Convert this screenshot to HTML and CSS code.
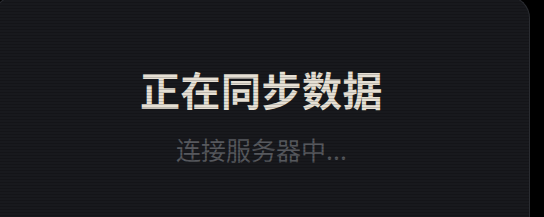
FILE: index.html
```html
<!doctype html>
<html lang="zh-CN">
<head>
  <meta charset="utf-8">
  <title>正在同步数据</title>
  <link rel="stylesheet" href="styles.css">
</head>
<body>

<div class="sync-card">
  <h1 class="sync-title">正在同步数据</h1>
  <p class="sync-status">连接服务器中...</p>
</div>

</body>
</html>
```

FILE: styles.css
```css
html {
  background-color: #000;
  overflow: hidden;
}

body {
  margin: 0;
  height: 217px;
  font-family: "Noto Sans CJK SC", "Noto Sans", sans-serif;
  overflow: hidden;
}

/* The loading card; it continues past the bottom of the frame */
.sync-card {
  position: relative;
  box-sizing: border-box;
  width: 537px;
  height: 221px;
  margin: -4px 0 0 -7px;
  padding-top: 64px;
  background-color: #18191d;
  border: 1px solid #2a2c31;
  border-bottom: 0;
  border-radius: 22px 22px 0 0;
  display: flex;
  flex-direction: column;
  align-items: center;
}

/* CRT-style scanlines laid over everything */
.sync-card::after {
  content: "";
  position: absolute;
  inset: 0;
  border-radius: inherit;
  pointer-events: none;
  background: repeating-linear-gradient(
    to bottom,
    rgba(0, 0, 0, 0) 0,
    rgba(0, 0, 0, 0) 2px,
    rgba(0, 0, 0, 0.18) 2px,
    rgba(0, 0, 0, 0.18) 3px
  );
}

.sync-title {
  margin: 0;
  color: #e6e0d5;
  font-size: 40px;
  font-weight: 700;
  line-height: 56px;
  letter-spacing: 0.5px;
}

.sync-status {
  margin: 16px 0 0;
  color: #56585d;
  font-size: 25px;
  line-height: 32px;
}
```
